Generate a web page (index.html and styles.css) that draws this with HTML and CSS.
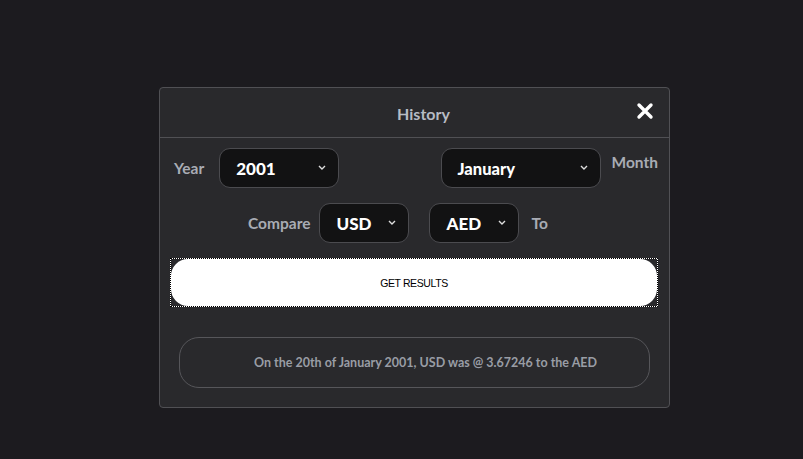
FILE: index.html
```html
<!DOCTYPE html>
<html lang="en">
<head>
<meta charset="utf-8">
<title>History</title>
<link rel="stylesheet" href="styles.css">
</head>
<body>
<div class="panel">
  <div class="panel-header">
    <span class="title">History</span>
    <button class="close" aria-label="Close">
      <svg width="18" height="18" viewBox="0 0 18 18"><path d="M3 3 L15 15 M15 3 L3 15" stroke="#fff" stroke-width="3.4" stroke-linecap="round" fill="none"/></svg>
    </button>
  </div>
  <div class="panel-body">
    <div class="row row-date">
      <div class="group">
        <span class="label">Year</span>
        <div class="select w-year"><span>2001</span><svg class="chev" width="8" height="5" viewBox="0 0 8 5"><path d="M1 1 L4 4 L7 1" stroke="#ddd" stroke-width="1.4" fill="none"/></svg></div>
      </div>
      <div class="group">
        <div class="select w-month"><span>January</span><svg class="chev" width="8" height="5" viewBox="0 0 8 5"><path d="M1 1 L4 4 L7 1" stroke="#ddd" stroke-width="1.4" fill="none"/></svg></div>
        <span class="label label-top">Month</span>
      </div>
    </div>
    <div class="row row-compare">
      <span class="label">Compare</span>
      <div class="select w-cur"><span>USD</span><svg class="chev" width="8" height="5" viewBox="0 0 8 5"><path d="M1 1 L4 4 L7 1" stroke="#ddd" stroke-width="1.4" fill="none"/></svg></div>
      <div class="select w-cur second"><span>AED</span><svg class="chev" width="8" height="5" viewBox="0 0 8 5"><path d="M1 1 L4 4 L7 1" stroke="#ddd" stroke-width="1.4" fill="none"/></svg></div>
      <span class="label">To</span>
    </div>
    <div class="btn-wrap">
      <button class="btn">GET RESULTS</button>
    </div>
    <div class="result">On the 20th of January 2001, USD was @ 3.67246 to the AED</div>
  </div>
</div>
</body>
</html>
```

FILE: styles.css
```css
* { box-sizing: border-box; }
html, body { margin: 0; height: 100%; }
body {
  background: #1c1b1f;
  font-family: Lato, "Open Sans", sans-serif;
  padding: 87px 0 0 159px;
}
.panel {
  width: 511px;
  height: 321px;
  background: #29292c;
  border: 1px solid #505054;
  border-radius: 4px;
}
.panel-header {
  height: 50px;
  border-bottom: 1px solid #505054;
  display: flex;
  align-items: center;
  justify-content: center;
  position: relative;
}
.title {
  color: #b7bcc4;
  font-weight: 700;
  font-size: 16px;
  margin-top: 1px;
  margin-left: 18px;
}
.close {
  position: absolute;
  right: 15px;
  top: 14px;
  background: none;
  border: 0;
  padding: 0;
  width: 18px;
  height: 18px;
  display: flex;
}
.panel-body {
  padding: 10px 11px 0 10px;
}
.row { display: flex; align-items: center; }
.row-date { justify-content: space-between; padding-left: 4px; }
.group { display: flex; align-items: center; gap: 11px; }
.group:first-child { gap: 15px; }
.label {
  color: #a8acb4;
  font-weight: 700;
  font-size: 15.5px;
}
.label-top { align-self: flex-start; margin-top: 5px; }
.select {
  height: 40px;
  background: #121213;
  border: 1px solid #4b4b4f;
  border-radius: 11px;
  display: flex;
  align-items: center;
  justify-content: space-between;
  padding: 0 12px 0 16px;
  color: #fff;
  font-weight: 900;
  font-size: 17px;
}
.select span { margin-top: 1px; }
.chev { margin-top: -2px; }
.w-year { width: 120px; }
.w-month { width: 160px; font-size: 16.5px; }
.w-cur { width: 90px; }
.row-compare { margin-top: 15px; padding-left: 78px; gap: 9px; }
.row-compare .second { margin-left: 11px; margin-right: 3px; }
.btn-wrap {
  margin-top: 15px;
  height: 49px;
  border: 1px dotted #000;
  background: linear-gradient(#29292c, #29292c) padding-box, #ffffff border-box;
}
.btn {
  display: block;
  width: 100%;
  height: 100%;
  background: #fff;
  border: 0;
  border-radius: 17px;
  font-family: "Liberation Sans", Arial, sans-serif;
  font-size: 10.5px;
  letter-spacing: -0.4px;
  color: #000;
  padding: 0;
}
.result {
  margin: 30px 8px 0 9px;
  height: 51px;
  border: 1px solid #56565a;
  border-radius: 20px;
  display: flex;
  align-items: center;
  justify-content: center;
  color: #999da5;
  font-weight: 700;
  font-size: 12.5px;
  padding-left: 22px;
}
```
